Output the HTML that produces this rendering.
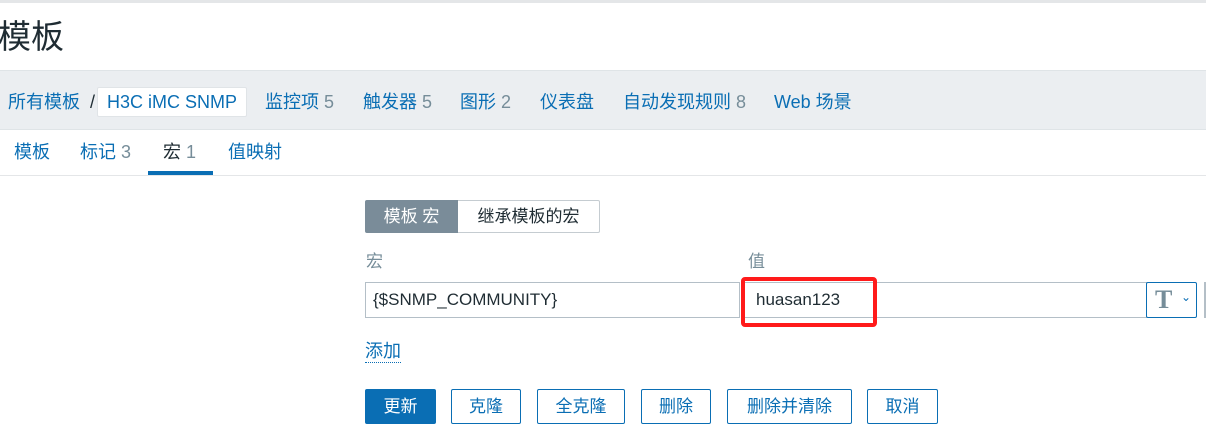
<!DOCTYPE html><html><head><meta charset="utf-8"><style>
*{box-sizing:border-box;margin:0;padding:0}
body{width:1206px;height:438px;overflow:hidden;background:#fff;font-family:"Liberation Sans","Noto Sans CJK SC",sans-serif;position:relative;color:#1f2c33}
.a{position:absolute;white-space:nowrap}
.blue{color:#0a6eb4}.g{color:#768d99}
.n{font-size:18px;line-height:22px}
.btn{position:absolute;top:389px;height:35px;border:1px solid #0a6eb4;border-radius:2px;color:#0a6eb4;font-size:17px;line-height:33px;text-align:center;background:#fff}
</style></head><body>
<div class="a" style="left:0;top:0;width:1206px;height:3px;background:#e4e6e8"></div>
<div class="a" style="left:-2px;top:15px;font-size:33px;line-height:44px;color:#1f2c33">模板</div>
<div class="a" style="left:0;top:70px;width:1206px;height:60px;background:#ebeef1;border-top:1px solid #dfe4e7;border-bottom:1px solid #dfe4e7"></div>
<div class="a blue n" style="left:8px;top:91px">所有模板</div>
<div class="a n" style="left:90px;top:91px">/</div>
<div class="a blue" style="left:97px;top:87px;width:150px;height:30px;background:#fff;border-radius:2px;border:1px solid #e0e4e7;font-size:18px;line-height:28px;text-align:center">H3C iMC SNMP</div>
<div class="a blue n" style="left:265px;top:91px">监控项 <span class="g">5</span></div>
<div class="a blue n" style="left:363px;top:91px">触发器 <span class="g">5</span></div>
<div class="a blue n" style="left:460px;top:91px">图形 <span class="g">2</span></div>
<div class="a blue n" style="left:540px;top:91px">仪表盘</div>
<div class="a blue n" style="left:623px;top:91px">自动发现规则 <span class="g">8</span></div>
<div class="a blue n" style="left:774px;top:91px">Web 场景</div>
<div class="a blue n" style="left:14px;top:141px">模板</div>
<div class="a blue n" style="left:80px;top:141px">标记 <span class="g">3</span></div>
<div class="a n" style="left:163px;top:141px">宏 <span class="g">1</span></div>
<div class="a blue n" style="left:228px;top:141px">值映射</div>
<div class="a" style="left:148px;top:171px;width:65px;height:4px;background:#0a6eb4"></div>
<div class="a" style="left:0;top:175px;width:1206px;height:1px;background:#e4e6e8"></div>
<div class="a" style="left:365px;top:200px;width:93px;height:33px;background:#7a8c99;color:#fff;font-size:17px;line-height:33px;text-align:center;border-radius:2px 0 0 2px">模板 宏</div>
<div class="a" style="left:458px;top:200px;width:142px;height:33px;border:1px solid #c5ccd1;border-left:none;font-size:17px;line-height:31px;text-align:center;border-radius:0 2px 2px 0">继承模板的宏</div>
<div class="a g" style="left:366px;top:252px;font-size:17px;line-height:20px">宏</div>
<div class="a g" style="left:748px;top:252px;font-size:17px;line-height:20px">值</div>
<div class="a" style="left:365px;top:282px;width:375px;height:36px;border:1px solid #b4bfc7;font-size:17px;line-height:34px;padding-left:7px">{$SNMP_COMMUNITY}</div>
<div class="a" style="left:744px;top:282px;width:403px;height:36px;border:1px solid #b4bfc7;font-size:17px;line-height:34px;padding-left:11px">huasan123</div>
<div class="a" style="left:1146px;top:282px;width:51px;height:36px;border:1px solid #0a6eb4;border-radius:2px"><span style="position:absolute;left:8px;top:2px;font-family:'Liberation Serif',serif;font-size:26px;font-weight:bold;color:#768d99">T</span><span style="position:absolute;left:34px;top:7px;font-size:12px;color:#0a6eb4">⌄</span></div>
<div class="a" style="left:1204px;top:282px;width:2px;height:36px;background:#b4bfc7"></div>
<div class="a" style="left:741px;top:277px;width:136px;height:50px;border:4px solid #ff1a1a;border-radius:4px"></div>
<div class="a blue" style="left:365px;top:340px;font-size:18px;line-height:22px;border-bottom:1px dotted #0a6eb4">添加</div>
<div class="btn" style="left:365px;width:71px;background:#0a6eb4;color:#fff">更新</div>
<div class="btn" style="left:451px;width:70px">克隆</div>
<div class="btn" style="left:537px;width:88px">全克隆</div>
<div class="btn" style="left:641px;width:70px">删除</div>
<div class="btn" style="left:727px;width:125px">删除并清除</div>
<div class="btn" style="left:867px;width:71px">取消</div>
</body></html>
